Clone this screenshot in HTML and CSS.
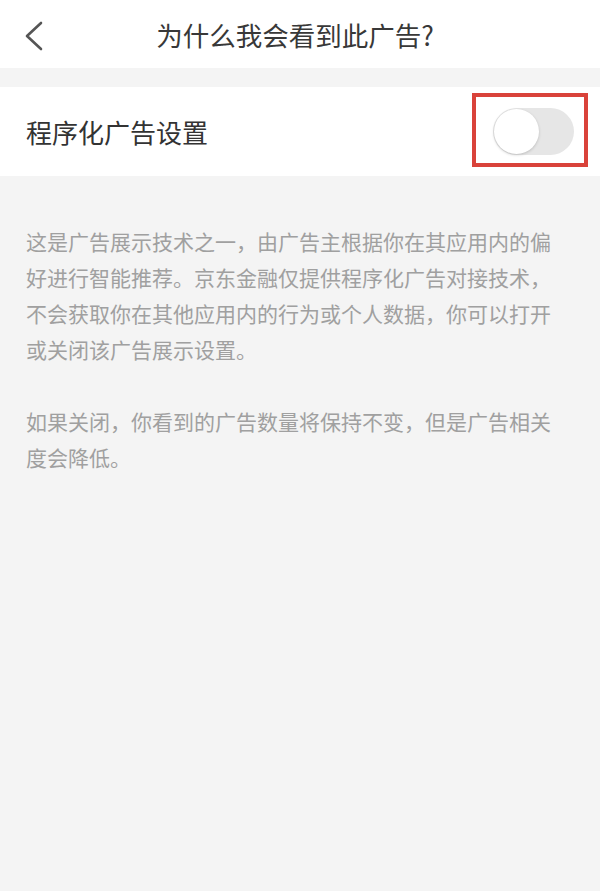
FILE: index.html
```html
<!DOCTYPE html>
<html lang="zh-CN">
<head>
    <meta charset="UTF-8">
    <meta name="viewport" content="width=device-width, initial-scale=1.0">
    <title>为什么我会看到此广告?</title>
    <link rel="stylesheet" href="styles.css">
</head>
<body>
    <div class="header">
        <a class="back" href="#">
            <svg width="20" height="30" viewBox="0 0 20 30">
                <polyline points="17,2 3,15 17,28" fill="none" stroke="#555" stroke-width="2.6" stroke-linecap="round" stroke-linejoin="round"/>
            </svg>
        </a>
        <div class="title">为什么我会看到此广告?</div>
    </div>

    <div class="setting-row">
        <span class="setting-label">程序化广告设置</span>
        <div class="switch-wrap">
            <div class="switch">
                <div class="knob"></div>
            </div>
            <div class="highlight"></div>
        </div>
    </div>

    <div class="desc">
        <p>这是广告展示技术之一，由广告主根据你在其应用内的偏好进行智能推荐。京东金融仅提供程序化广告对接技术，不会获取你在其他应用内的行为或个人数据，你可以打开或关闭该广告展示设置。</p>
        <p>如果关闭，你看到的广告数量将保持不变，但是广告相关度会降低。</p>
    </div>
</body>
</html>
```

FILE: styles.css
```css
body {
    margin: 0;
    background-color: #f4f4f4;
    font-family: "Noto Sans CJK SC", "Noto Sans", sans-serif;
    color: #333;
}
.header {
    position: relative;
    height: 68px;
    background-color: #fff;
    display: flex;
    align-items: center;
    justify-content: center;
}
.back {
    position: absolute;
    left: 24px;
    top: 21px;
    display: block;
    line-height: 0;
}
.title {
    font-size: 26.5px;
    color: #383838;
    padding-right: 10px;
}
.setting-row {
    margin-top: 19px;
    height: 89px;
    background-color: #fff;
    display: flex;
    align-items: center;
    justify-content: space-between;
    padding: 0 26px;
}
.setting-label {
    font-size: 26px;
    color: #333;
}
.switch-wrap {
    position: relative;
}
.switch {
    width: 81px;
    height: 47px;
    border-radius: 24px;
    background-color: #e6e6e6;
    display: flex;
    align-items: center;
}
.knob {
    width: 45px;
    height: 45px;
    margin-left: 1px;
    border-radius: 50%;
    background-color: #fff;
    box-shadow: 0 1px 3px rgba(0,0,0,0.18);
}
.highlight {
    position: absolute;
    left: -21px;
    right: -14px;
    top: -15px;
    bottom: -12px;
    border: 4px solid #d9423a;
}
.desc {
    padding: 47px 49px 0 26px;
    font-size: 21px;
    line-height: 36px;
    color: #a0a0a0;
}
.desc p {
    margin: 0 0 36px;
}
```
